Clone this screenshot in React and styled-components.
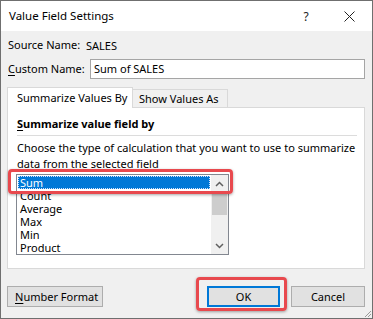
import React from "react";
import styled, { createGlobalStyle } from "styled-components";

const Global = createGlobalStyle`
  html, body { margin: 0; padding: 0; background: #ffffff; }
  body { font-family: "Noto Sans", "Open Sans", sans-serif; font-size: 11px; color: #000; }
  * { box-sizing: border-box; }
`;

const Window = styled.div`
  width: 373px;
  height: 319px;
  border: 1px solid #6f6f6f;
  display: flex;
  flex-direction: column;
  background: #f0f0f0;
  position: relative;
  overflow: hidden;
`;

const TitleBar = styled.div`
  height: 30px;
  background: #ffffff;
  display: flex;
  align-items: center;
  padding-left: 8px;
  flex-shrink: 0;
`;

const Title = styled.div`
  flex: 1;
  font-size: 11.5px;
  line-height: 16px;
  white-space: nowrap;
`;

const TitleButton = styled.div`
  width: ${(p) => p.$w}px;
  height: 30px;
  display: flex;
  align-items: center;
  justify-content: center;
  font-size: 12px;
  color: #222;
`;

const Body = styled.div`
  flex: 1;
  display: flex;
  flex-direction: column;
  padding: 6px 6px 0 6px;
`;

const FieldRow = styled.div`
  display: flex;
  align-items: center;
  height: ${(p) => p.$h}px;
  margin-bottom: ${(p) => p.$mb || 0}px;
  padding-left: 1px;
  white-space: nowrap;
`;

const Label = styled.div`
  width: ${(p) => p.$w}px;
  line-height: 16px;
  flex-shrink: 0;
  white-space: nowrap;
`;

const U = styled.span`
  text-decoration: underline;
  text-underline-offset: 2px;
`;

const TextInput = styled.div`
  width: 275px;
  height: 20px;
  border: 1px solid #a5a5a5;
  background: #fff;
  padding-left: 3px;
  display: flex;
  align-items: center;
  line-height: 16px;
`;

const Tabs = styled.div`
  display: flex;
  align-items: flex-end;
  height: 21px;
  margin-top: 8px;
  position: relative;
  z-index: 1;
`;

const Tab = styled.div`
  height: ${(p) => (p.$active ? 21 : 19)}px;
  width: ${(p) => p.$w}px;
  background: ${(p) => (p.$active ? "#ffffff" : "#f0f0f0")};
  border: 1px solid #d9d9d9;
  border-bottom: ${(p) => (p.$active ? "none" : "1px solid #d9d9d9")};
  border-left: ${(p) => (p.$left ? "1px solid #d9d9d9" : "none")};
  padding-left: ${(p) => p.$pl}px;
  display: flex;
  align-items: center;
  line-height: 16px;
  white-space: nowrap;
`;

const Panel = styled.div`
  margin-top: -1px;
  width: 358px;
  height: 162px;
  background: #ffffff;
  border: 1px solid #d9d9d9;
  padding: 8px 7px 0 9px;
  display: flex;
  flex-direction: column;
`;

const GroupHeading = styled.div`
  font-weight: 700;
  line-height: 16px;
  padding-bottom: 3px;
  border-bottom: 1px solid #dcdcdc;
`;

const Description = styled.div`
  margin-top: 4px;
  line-height: 16px;
  width: 345px;
`;

const ListWrap = styled.div`
  position: relative;
  margin-top: 2px;
  margin-left: -1px;
  width: 213px;
`;

const ListBox = styled.div`
  width: 213px;
  height: 81px;
  border: 1px solid #828790;
  background: #fff;
  display: flex;
  overflow: hidden;
`;

const Items = styled.div`
  flex: 1;
  padding-top: 1px;
`;

const Item = styled.div`
  height: 13px;
  line-height: 13px;
  padding-left: 2px;
  margin-left: 1px;
  margin-right: 1px;
  background: ${(p) => (p.$selected ? "#0078d7" : "transparent")};
  color: ${(p) => (p.$selected ? "#ffffff" : "#000")};
  outline: ${(p) => (p.$selected ? "1px dotted #cfe3ff" : "none")};
  outline-offset: -1px;
  white-space: nowrap;
`;

const ScrollBar = styled.div`
  width: 17px;
  background: #f0f0f0;
  display: flex;
  flex-direction: column;
  align-items: center;
`;

const ScrollArrow = styled.div`
  height: 17px;
  width: 17px;
  display: flex;
  align-items: center;
  justify-content: center;
`;

const Track = styled.div`
  flex: 1;
  width: 100%;
  padding: 2px 1px 0 1px;
`;

const Thumb = styled.div`
  height: 21px;
  background: #cdcdcd;
`;

const Highlight = styled.div`
  position: absolute;
  left: ${(p) => p.$l}px;
  top: ${(p) => p.$t}px;
  width: ${(p) => p.$w}px;
  height: ${(p) => p.$h}px;
  border: 3px solid #e8494e;
  border-radius: 4px;
  box-shadow: 0 1px 3px rgba(0, 0, 0, 0.35);
  pointer-events: none;
`;

const ButtonRow = styled.div`
  display: flex;
  align-items: center;
  margin-top: 17px;
`;

const Button = styled.div`
  position: relative;
  width: ${(p) => p.$w}px;
  height: 21px;
  margin-left: ${(p) => p.$ml || 0}px;
  background: #e1e1e1;
  border: ${(p) => (p.$default ? "2px solid #0078d7" : "1px solid #adadad")};
  display: flex;
  align-items: center;
  justify-content: ${(p) => (p.$left ? "flex-start" : "center")};
  padding-left: ${(p) => (p.$left ? 7 : 0)}px;
  line-height: 16px;
  white-space: nowrap;
`;

const Grip = styled.svg`
  position: absolute;
  right: 0;
  bottom: 0;
`;

const Chevron = ({ up }) => (
  <svg width="9" height="6" viewBox="0 0 9 6">
    <path
      d={up ? "M1 5 L4.5 1.5 L8 5" : "M1 1 L4.5 4.5 L8 1"}
      fill="none"
      stroke="#606060"
      strokeWidth="1.5"
    />
  </svg>
);

const items = ["Sum", "Count", "Average", "Max", "Min", "Product"];

export default function App() {
  return (
    <>
      <Global />
      <Window>
        <TitleBar>
          <Title>Value Field Settings</Title>
          <TitleButton $w={40}>?</TitleButton>
          <TitleButton $w={46}>
            <svg width="11" height="11" viewBox="0 0 11 11">
              <path d="M0.5 0.5 L10.5 10.5 M10.5 0.5 L0.5 10.5" stroke="#222" strokeWidth="1" />
            </svg>
          </TitleButton>
        </TitleBar>
        <Body>
          <FieldRow $h={16} $mb={6}>
            <Label $w={78}>Source Name:</Label>
            <span>SALES</span>
          </FieldRow>
          <FieldRow $h={20}>
            <Label $w={82}>
              <U>C</U>ustom Name:
            </Label>
            <TextInput>Sum of SALES</TextInput>
          </FieldRow>
          <Tabs>
            <Tab $active $left $w={126} $pl={9}>Summarize Values By</Tab>
            <Tab $w={95} $pl={6}>Show Values As</Tab>
          </Tabs>
          <Panel>
            <GroupHeading>
              <U>S</U>ummarize value field by
            </GroupHeading>
            <Description>
              Choose the type of calculation that you want to use to summarize data from the selected field
            </Description>
            <ListWrap>
              <ListBox>
                <Items>
                  {items.map((it, i) => (
                    <Item key={it} $selected={i === 0}>{it}</Item>
                  ))}
                </Items>
                <ScrollBar>
                  <ScrollArrow><Chevron up /></ScrollArrow>
                  <Track><Thumb /></Track>
                  <ScrollArrow><Chevron /></ScrollArrow>
                </ScrollBar>
              </ListBox>
              <Highlight $l={-8} $t={-5} $w={225} $h={25} />
            </ListWrap>
          </Panel>
          <ButtonRow>
            <Button $w={96} $left>
              <span><U>N</U>umber Format</span>
            </Button>
            <Button $w={73} $ml={104} $default>
              OK
              <Highlight $l={-13} $t={-11} $w={91} $h={34} />
            </Button>
            <Button $w={74} $ml={11}>Cancel</Button>
          </ButtonRow>
        </Body>
        <Grip width="10" height="10" viewBox="0 0 10 10">
          <path d="M9 3 L3 9 M9 6 L6 9" stroke="#9a9a9a" strokeWidth="1" />
        </Grip>
      </Window>
    </>
  );
}
